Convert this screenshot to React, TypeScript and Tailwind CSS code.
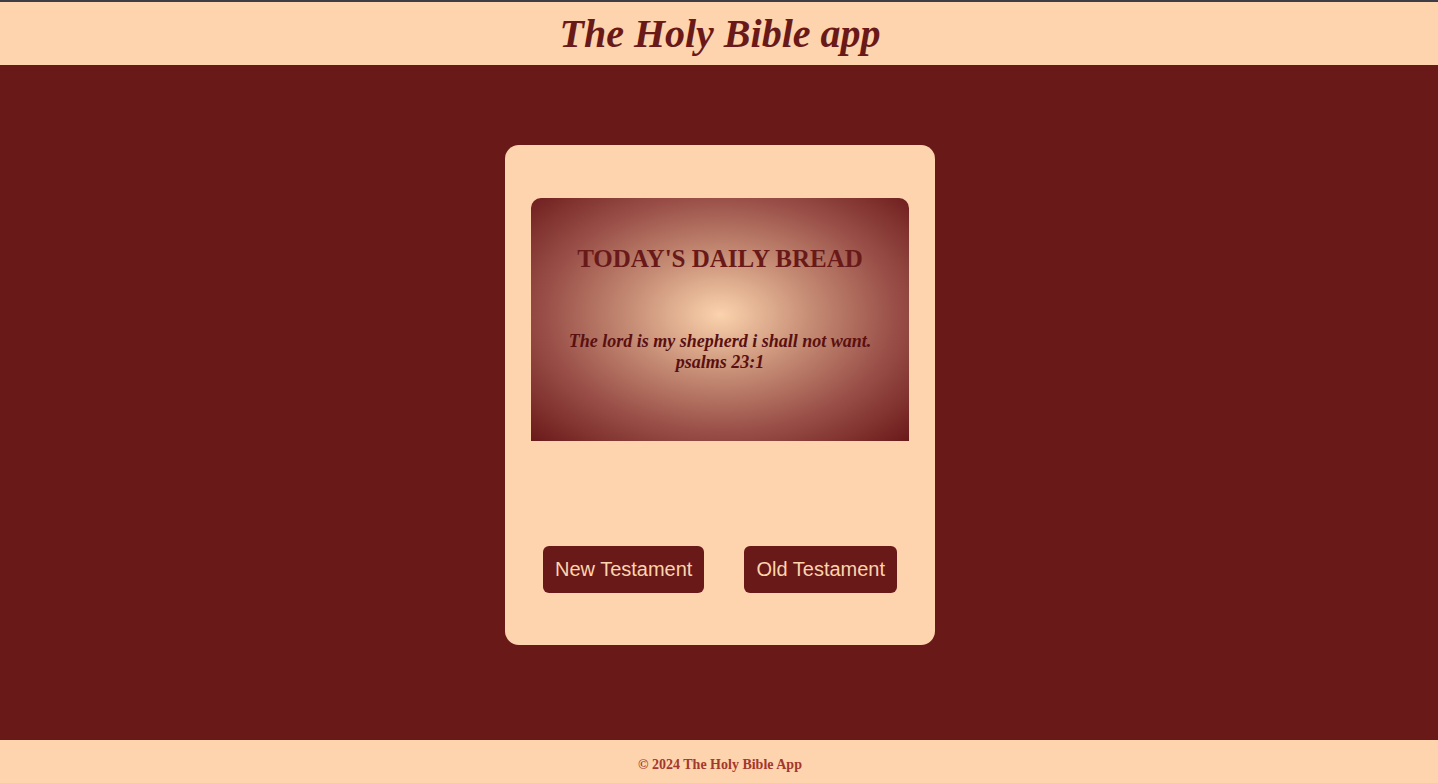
import React from "react";

export default function App() {
  return (
    <div className="flex min-h-[783px] flex-col border-t-2 border-[#3d3d47] bg-[#6a1919]" style={{ fontFamily: '"Liberation Serif", serif' }}>
      <header className="flex h-[63px] items-center justify-center bg-[#fdd4ad] pl-[2px]">
        <h1 className="text-[40px] font-bold italic leading-none text-[#6a1919]">The Holy Bible app</h1>
      </header>
      <main className="flex flex-1 justify-center pl-[2px] pt-[80px]">
        <div className="flex h-[500px] w-[430px] flex-col rounded-[14px] bg-[#fdd4ad] px-[26px] pt-[53px]">
          <div
            className="flex h-[243px] flex-col items-center rounded-t-[10px] pt-[46px] text-center"
            style={{ background: "radial-gradient(ellipse at 50% 48%, #fbd3ad 0%, #c48a73 35%, #9a5048 65%, #6a1919 100%)" }}
          >
            <h2 className="text-[25px] font-bold leading-[30px] text-[#6a1919]">TODAY'S DAILY BREAD</h2>
            <p className="mt-[57px] text-[18px] font-bold italic leading-[21px] text-[#5a1010]">
              The lord is my shepherd i shall not want.
              <br />
              psalms 23:1
            </p>
          </div>
          <div className="mt-[105px] flex justify-center gap-[40px]" style={{ fontFamily: '"Liberation Sans", sans-serif' }}>
            <button className="h-[47px] rounded-[6px] bg-[#6a1919] px-[12px] pb-[2px] text-[20px] text-[#fdd4ad]">New Testament</button>
            <button className="h-[47px] rounded-[6px] bg-[#6a1919] px-[12px] pb-[2px] text-[20px] text-[#fdd4ad]">Old Testament</button>
          </div>
        </div>
      </main>
      <footer className="flex h-[43px] items-center justify-center bg-[#fdd4ad] pl-[2px] pt-[5px]">
        <p className="text-[14px] font-bold text-[#a3382e]">© 2024 The Holy Bible App</p>
      </footer>
    </div>
  );
}
